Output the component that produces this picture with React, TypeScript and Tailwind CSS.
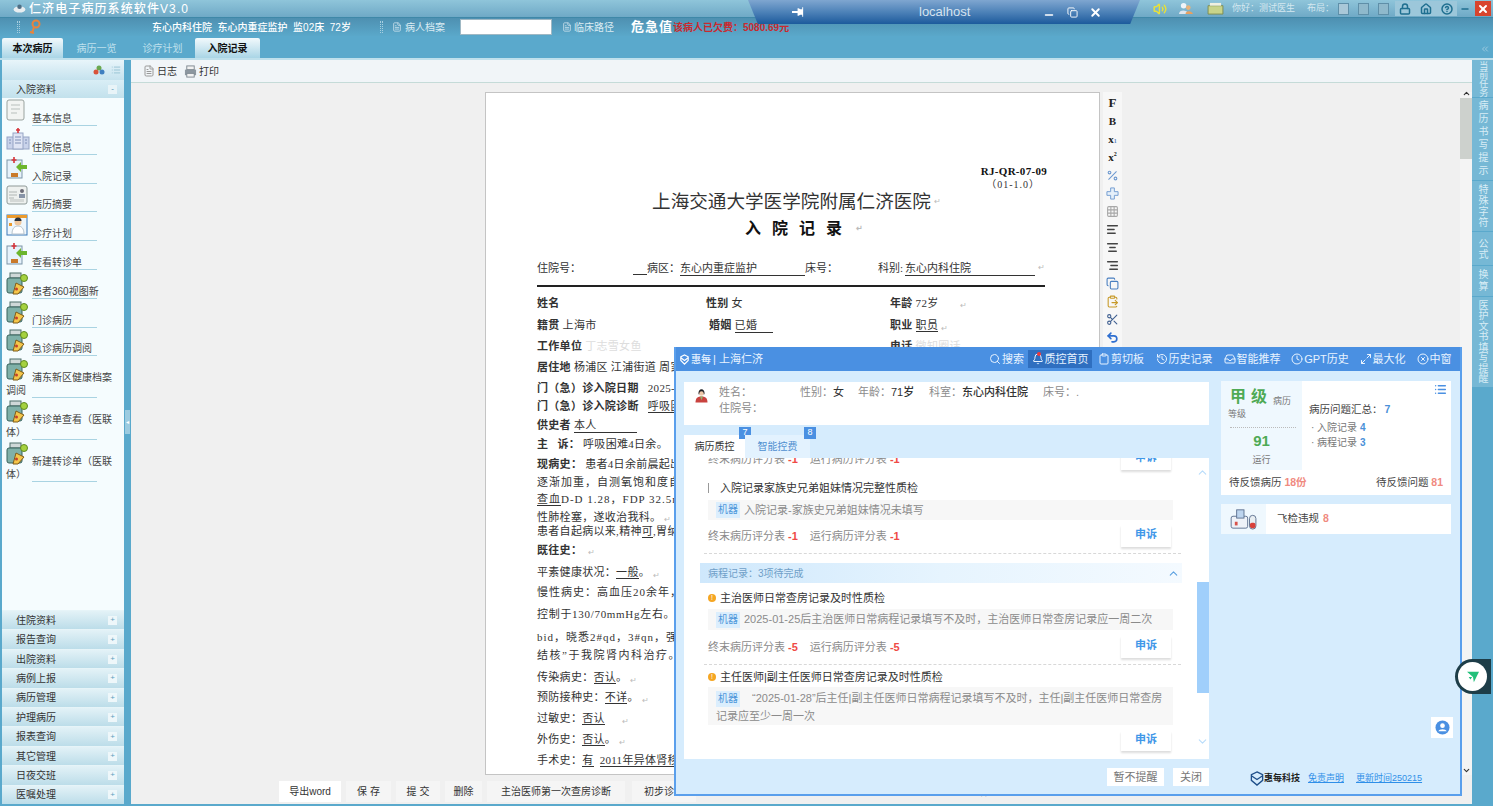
import { AlignCenter, AlignLeft, AlignRight, Bell, ChevronDown, ChevronUp, ChevronsLeft, Clipboard, ClipboardPaste, Clock, Copy, FileText, Grid3x3, HelpCircle, History, Home, Inbox, List, Lock, Maximize2, Minus, Percent, Scissors, Search, Undo2, Volume2, X, XCircle } from 'lucide-react';

const sideItems = [
  { label: '基本信息', icon: 'doc' },
  { label: '住院信息', icon: 'hospital' },
  { label: '入院记录', icon: 'transfer' },
  { label: '病历摘要', icon: 'card' },
  { label: '诊疗计划', icon: 'doctor' },
  { label: '查看转诊单', icon: 'transfer' },
  { label: '患者360视图新', icon: 'jar' },
  { label: '门诊病历', icon: 'jar' },
  { label: '急诊病历调阅', icon: 'jar' },
  { label: '浦东新区健康档案调阅', icon: 'jar' },
  { label: '转诊单查看（医联体）', icon: 'jar' },
  { label: '新建转诊单（医联体）', icon: 'jar' },
];

const sideGroups = ['住院资料', '报告查询', '出院资料', '病例上报', '病历管理', '护理病历', '报表查询', '其它管理', '日夜交班', '医嘱处理'];
const sideTabs = [
  { label: '当前任务', cls: 'h-[37px] text-[9px]' },
  { label: '病历书写提示', cls: 'h-[82px] text-[10px] tracking-[3px]' },
  { label: '特殊字符', cls: 'h-[50px] text-[10px] tracking-[1px]' },
  { label: '公式', cls: 'h-[33px] text-[10px] tracking-[1px]' },
  { label: '换算', cls: 'h-[30px] text-[10px] tracking-[2px]' },
  { label: '医护文书填写提醒', cls: 'h-[90px] text-[10px] tracking-[0.500px]' },
];

function SideIcon({ type }: { type: string }) {
  if (type === 'doc') {
    return (
      <svg viewBox="0 0 20 22" className="h-[22px] w-[20px]">
        <rect x="1" y="1" width="17" height="20" rx="2" fill="#f2f4f2" stroke="#9aa39f" />
        <path d="M5 6h9M5 10h9M5 14h6" stroke="#b8bfbc" />
      </svg>
    );
  }
  if (type === 'hospital') {
    return (
      <svg viewBox="0 0 24 22" className="h-[22px] w-[24px]">
        <rect x="1" y="9" width="22" height="12" fill="#c9d3ea" stroke="#96a4c4" />
        <rect x="7" y="5" width="10" height="16" fill="#dfe5f4" stroke="#96a4c4" />
        <path d="M12 0v5M10 2h4" stroke="#d6333a" strokeWidth="1.6" />
        <path d="M3 12h2M3 15h2M9 9h6M9 12h6M9 15h6M19 12h2M19 15h2" stroke="#7f8fb5" />
      </svg>
    );
  }
  if (type === 'transfer') {
    return (
      <svg viewBox="0 0 22 22" className="h-[22px] w-[22px]">
        <rect x="1" y="3" width="15" height="18" fill="#e6f2fb" stroke="#7c95a8" />
        <path d="M8 0v6M5.500 3h5" stroke="#d6333a" strokeWidth="1.6" />
        <rect x="5" y="16" width="7" height="4" fill="#c9792a" />
        <path d="M21 8h-6V5l-5 5 5 5v-3h6z" fill="#6cb52d" />
      </svg>
    );
  }
  if (type === 'card') {
    return (
      <svg viewBox="0 0 22 20" className="h-[20px] w-[22px]">
        <rect x="1" y="1" width="20" height="18" rx="2" fill="#eef1ef" stroke="#8f9a98" />
        <path d="M3 7h8M3 10h8M3 13h5" stroke="#b0b6b4" />
        <circle cx="16" cy="6" r="2" fill="#6d6d78" />
        <rect x="13" y="9" width="6" height="4" fill="#8895a8" />
        <rect x="4" y="14" width="14" height="3" fill="#d4d8d6" />
      </svg>
    );
  }
  if (type === 'doctor') {
    return (
      <svg viewBox="0 0 22 22" className="h-[22px] w-[22px]">
        <rect x="1" y="1" width="20" height="20" fill="#eef6fb" stroke="#3b78b8" />
        <rect x="1" y="1" width="20" height="3" fill="#ec9a2c" />
        <circle cx="12" cy="8" r="3.500" fill="#f0c79c" />
        <path d="M8.500 7a3.500 3.500 0 0 1 7 0z" fill="#27303c" />
        <path d="M6 20c0-6 3-8 6-8s6 2 6 8z" fill="#fff" stroke="#b6c3cc" />
        <path d="M3 9h3v3H3z" fill="#ec9a2c" />
      </svg>
    );
  }
  return (
    <svg viewBox="0 0 22 24" className="h-[24px] w-[22px]">
      <rect x="4" y="1" width="11" height="5" fill="#cfd8d8" stroke="#4f6f6a" />
      <rect x="1" y="6" width="15" height="15" rx="2" fill="#7fb0a8" stroke="#38625c" />
      <path d="M7 22l3-11 8 4-6 7z" fill="#f4c64a" stroke="#7f5c18" />
      <circle cx="10.500" cy="17" r="1.500" fill="#c2402c" />
      <circle cx="18" cy="6" r="3.500" fill="#a5d13e" stroke="#5e8a22" />
    </svg>
  );
}

function Mark() {
  return <span className="ml-[3px] align-bottom text-[8px] leading-[8px] text-[#bbbbbb]">↵</span>;
}

function Label({ children }: { children: React.ReactNode }) {
  return <b className="mr-[3px] font-bold">{children}</b>;
}

function Val({ children }: { children: React.ReactNode }) {
  return <span className="border-b border-[#333333]">{children}</span>;
}

function ScoreRow({ a, b, cut }: { a: string; b: string; cut?: boolean }) {
  return (
    <div className={`flex h-[22px] items-center justify-between pl-[24px] pr-[38px] ${cut ? '-mt-[10px]' : ''}`}>
      <div className="text-[11px] text-[#8b8b8b]">
        终末病历评分表 <b className="text-[#ef4a45]">{a}</b>
        <span className="ml-[12px]">运行病历评分表 </span>
        <b className="text-[#ef4a45]">{b}</b>
      </div>
      <div className="flex h-[22px] w-[50px] items-center justify-center bg-white pb-[3px] text-[11px] font-bold text-[#3f97e8] shadow-[0_2px_2px_#dddddd]">申诉</div>
    </div>
  );
}

function Tag() {
  return <span className="mr-[4px] inline-block bg-[#dbeefd] px-[2px] text-[10px] leading-[16px] text-[#4f97da]">机器</span>;
}

function QcPopup() {
  const nav = [
    { label: '搜索', icon: <Search size={12} />, cls: 'w-[41px]' },
    { label: '质控首页', icon: <Bell size={12} />, cls: 'relative w-[64px] bg-[#2f6fc0]', dot: true },
    { label: '剪切板', icon: <Clipboard size={12} />, cls: 'w-[56px]' },
    { label: '历史记录', icon: <History size={12} />, cls: 'w-[68px]' },
    { label: '智能推荐', icon: <Inbox size={12} />, cls: 'w-[66px]' },
    { label: 'GPT历史', icon: <Clock size={12} />, cls: 'w-[68px]' },
    { label: '最大化', icon: <Maximize2 size={12} />, cls: 'w-[55px]' },
    { label: '中窗', icon: <XCircle size={12} />, cls: 'w-[46px]' },
  ];
  return (
    <div className="absolute left-[674px] top-[347px] flex h-[449px] w-[788px] flex-col border-x-2 border-b-2 border-[#5a9fec] bg-[#d6ecfd]">
      <div className="flex h-[24px] shrink-0 items-center justify-between bg-[#4a90e2] pl-[3px] pr-[3px] text-[11px] text-[#e8f3ff]">
        <div className="flex items-center gap-[1px]">
          <svg viewBox="0 0 12 12" className="h-[11px] w-[11px]" fill="none" stroke="#ffffff" strokeWidth="1.300">
            <path d="M2 3l4-2 4 2v4l-4 4-4-4z" />
            <path d="M2 4l4 3 4-3" />
          </svg>
          <span className="text-[10px] font-medium">惠每</span>
          <span className="ml-[1px] whitespace-nowrap">| 上海仁济</span>
        </div>
        <div className="flex h-[18px] items-center gap-[1px]">
          {nav.map((n) => (
            <div key={n.label} className={`flex h-[18px] items-center justify-center gap-[1px] whitespace-nowrap ${n.cls}`}>
              {n.icon}
              {n.dot && <span className="absolute left-[9px] top-[2px] h-[4px] w-[4px] rounded-full bg-[#f0383a]" />}
              {n.label}
            </div>
          ))}
        </div>
      </div>

      <div className="flex min-h-0 flex-1 pl-[8px]">
        <div className="flex w-[525px] flex-col">
          <div className="mt-[11px] flex h-[43px] shrink-0 bg-white pl-[10px] pt-[2px] text-[11px] leading-[16px] text-[#8b8b8b]">
            <svg viewBox="0 0 20 22" className="mr-[10px] mt-[1px] h-[20px] w-[15px]">
              <path d="M6 10c-1-9 9-9 8 0z" fill="#1f1f24" />
              <circle cx="10" cy="9" r="3" fill="#f0c8a8" />
              <path d="M2 21c0-6 3-8 8-8s8 2 8 8z" fill="#c9423f" />
              <path d="M8 13h4l-2 5z" fill="#8fb26a" />
            </svg>
            <div>
              <div className="flex whitespace-nowrap">
                <span className="w-[81px]">姓名：</span>
                <span className="w-[58px]">性别：<span className="text-[#333333]">女</span></span>
                <span className="w-[71px]">年龄：<span className="font-medium text-[#333333]">71岁</span></span>
                <span className="w-[114px]">科室：<span className="font-medium text-[#333333]">东心内科住院</span></span>
                <span>床号：.</span>
              </div>
              <div>住院号：</div>
            </div>
          </div>

          <div className="flex h-[33px] shrink-0 items-end text-[10px]">
            <div className="relative flex h-[23px] w-[61px] items-center justify-center bg-white text-[#333333]">
              病历质控
              <span className="absolute -top-[8px] right-[-6px] flex h-[12px] w-[12px] items-center justify-center bg-[#4a90e2] text-[9px] text-white">7</span>
            </div>
            <div className="relative flex h-[23px] w-[65px] items-center justify-center bg-[#e3f2fe] text-[#4f8fd0]">
              智能控费
              <span className="absolute -top-[8px] right-[-6px] flex h-[12px] w-[12px] items-center justify-center bg-[#4a90e2] text-[9px] text-white">8</span>
            </div>
          </div>

          <div className="relative h-[301px] shrink-0 overflow-hidden bg-white">
            <ScoreRow a="-1" b="-1" cut />
            <div className="ml-[24px] mt-[10px] flex h-[16px] items-center text-[11px] text-[#333333]">
              <span className="mr-[11px] h-[10px] w-[1px] bg-[#999999]" />
              入院记录家族史兄弟姐妹情况完整性质检
            </div>
            <div className="ml-[24px] mt-[4px] flex h-[20px] w-[465px] items-center bg-[#f7f7f7] pl-[8px] text-[11px] text-[#8b8b8b]">
              <Tag />
              入院记录-家族史兄弟姐妹情况未填写
            </div>
            <div className="mt-[5px]">
              <ScoreRow a="-1" b="-1" />
            </div>
            <div className="ml-[20px] mt-[6px] w-[477px] border-t border-dashed border-[#d8d8d8]" />

            <div className="ml-[16px] mt-[9px] flex h-[20px] w-[482px] items-center justify-between bg-gradient-to-r from-[#cfe8fc] via-[#e6f4fe] to-[#f4faff] pl-[8px] pr-[2px] text-[10px] text-[#6f9fc8]">
              病程记录：3项待完成
              <ChevronUp size={13} color="#5aa0e0" />
            </div>

            <div className="ml-[24px] mt-[7px] flex h-[16px] items-center text-[11px] text-[#333333]">
              <span className="mr-[4px] flex h-[8px] w-[8px] items-center justify-center rounded-full bg-[#f5a623] text-[7px] text-white">!</span>
              主治医师日常查房记录及时性质检
            </div>
            <div className="ml-[24px] mt-[3px] flex h-[21px] w-[465px] items-center whitespace-nowrap bg-[#f7f7f7] pl-[8px] text-[11px] text-[#8b8b8b]">
              <Tag />
              2025-01-25后主治医师日常病程记录填写不及时，主治医师日常查房记录应一周二次
            </div>
            <div className="mt-[6px]">
              <ScoreRow a="-5" b="-5" />
            </div>
            <div className="ml-[20px] mt-[6px] w-[477px] border-t border-dashed border-[#d8d8d8]" />

            <div className="ml-[24px] mt-[4px] flex h-[16px] items-center text-[11px] text-[#333333]">
              <span className="mr-[4px] flex h-[8px] w-[8px] items-center justify-center rounded-full bg-[#f5a623] text-[7px] text-white">!</span>
              主任医师|副主任医师日常查房记录及时性质检
            </div>
            <div className="ml-[24px] mt-[2px] h-[38px] w-[465px] bg-[#f7f7f7] pl-[8px] pt-[2px] text-[11px] leading-[18px] text-[#8b8b8b]">
              <Tag />
              <span className="ml-[8px]">“2025-01-28”后主任|副主任医师日常病程记录填写不及时，主任|副主任医师日常查房记录应至少一周一次</span>
            </div>
            <div className="mt-[6px] flex justify-end pr-[38px]">
              <div className="flex h-[20px] w-[50px] items-center justify-center pb-[3px] text-[11px] font-bold text-[#3f97e8] shadow-[0_2px_2px_#dddddd]">申诉</div>
            </div>

            <ChevronUp size={13} color="#b8dcfb" className="absolute right-[0px] top-[8px]" />
            <div className="absolute right-0 top-[124px] h-[111px] w-[12px] bg-[#a0cffb]" />
            <ChevronDown size={13} color="#b8dcfb" className="absolute right-[0px] top-[277px]" />
          </div>

          <div className="mt-[9px] flex justify-end gap-[9px] text-[11px] text-[#777777]">
            <div className="flex h-[18px] w-[57px] items-center justify-center bg-white">暂不提醒</div>
            <div className="flex h-[18px] w-[36px] items-center justify-center bg-white">关闭</div>
          </div>
        </div>

        <div className="relative ml-[12px] flex w-[230px] flex-col">
          <div className="mt-[10px] h-[114px] shrink-0 bg-white text-[10px] text-[#777777]">
            <div className="flex h-[89px]">
              <div className="w-[81px] bg-[#eff8fe] pl-[9px]">
                <div className="flex h-[27px] items-end gap-[1px] whitespace-nowrap">
                  <span className="font-['Liberation_Serif','Noto_Sans_CJK_SC',serif] text-[16px] font-bold leading-[22px] tracking-[5px] text-[#4eaa55]">甲级</span>
                  <span className="text-[9px] leading-[14px]">病历</span>
                </div>
                <div className="-ml-[2px] text-[9px] leading-[13px]">等级</div>
                <div className="mt-[6px] w-[66px] border-t border-dotted border-[#bbbbbb]" />
                <div className="mt-[2px] pr-[9px] text-center">
                  <b className="block text-[15px] leading-[22px] text-[#4eaa55]">91</b>
                  <span className="text-[9px] leading-[14px]">运行</span>
                </div>
              </div>
              <div className="relative flex-1 pl-[7px] pt-[20px]">
                <List size={13} color="#4a90e2" strokeWidth={2.500} className="absolute right-[4px] top-[2px]" />
                <div className="text-[10.500px] leading-[16px] text-[#444444]">
                  病历问题汇总：<b className="ml-[2px] text-[#4a90d8]">7</b>
                </div>
                <div className="mt-[3px] pl-[2px] leading-[15px]">· 入院记录 <b className="text-[#4a90d8]">4</b></div>
                <div className="pl-[2px] leading-[15px]">· 病程记录 <b className="text-[#4a90d8]">3</b></div>
              </div>
            </div>
            <div className="flex h-[25px] items-center justify-between px-[8px] text-[10.500px] text-[#444444]">
              <span>待反馈病历 <b className="text-[#f08a80]">18份</b></span>
              <span>待反馈问题 <b className="text-[#f08a80]">81</b></span>
            </div>
          </div>
          <div className="mt-[9px] flex h-[30px] shrink-0 items-center bg-white text-[10.500px] text-[#444444]">
            <div className="flex h-[30px] w-[45px] items-center justify-center bg-[#eff8fe]">
              <svg viewBox="0 0 30 24" className="h-[22px] w-[28px]">
                <rect x="1" y="9" width="18" height="13" rx="2" fill="#eef2f8" stroke="#5b6f8e" />
                <rect x="7" y="2" width="8" height="9" fill="#bcd4ee" stroke="#5b6f8e" />
                <rect x="5" y="15" width="3" height="4" fill="#d8534a" />
                <rect x="21" y="8" width="7" height="15" rx="3.500" fill="#e8eef2" stroke="#5b6f8e" />
                <rect x="21.500" y="16" width="6" height="6" rx="2" fill="#d8403a" />
              </svg>
            </div>
            <span className="ml-[11px]">飞检违规</span>
            <b className="ml-[4px] text-[#f08a80]">8</b>
          </div>

          <div className="absolute left-[210px] top-[346px] flex h-[21px] w-[22px] items-center justify-center bg-white">
            <svg viewBox="0 0 16 16" className="h-[15px] w-[15px]">
              <circle cx="8" cy="8" r="7.500" fill="#4a90e2" />
              <circle cx="8" cy="6" r="2.500" fill="#ffffff" />
              <path d="M3.500 12c1-3 8-3 9 0z" fill="#ffffff" />
            </svg>
          </div>

          <div className="absolute bottom-[8px] left-[29px] flex items-center whitespace-nowrap text-[9px]">
            <svg viewBox="0 0 14 16" className="h-[15px] w-[14px]" fill="none" stroke="#1f4f8a" strokeWidth="1.400">
              <path d="M7 1l6 3v6l-6 5-6-5V4z" />
              <path d="M1 5l6 4 6-4" />
            </svg>
            <b className="w-[36px] text-[#222222]">惠每科技</b>
            <span className="ml-[8px] text-[#2f8fe8] underline">免责声明</span>
            <span className="ml-[12px] text-[#2f8fe8] underline">更新时间250215</span>
          </div>
        </div>
      </div>
    </div>
  );
}

function DocumentPage() {
  return (
    <div className="h-[683px] w-[615px] shrink-0 overflow-hidden border border-[#c4c4c4] bg-white pl-[51px] pr-[55px] pt-[71px] font-['Liberation_Serif','Noto_Sans_CJK_SC',serif] text-[11px] leading-[14px] tracking-[0.300px] text-[#333333]">
      <div className="h-[14px] text-right font-bold text-[#111111]"><span className="-mr-[3px] inline-block">RJ-QR-07-09</span></div>
      <div className="h-[13px] pr-[4px] text-right text-[10px] tracking-[1px]">（01-1.0）</div>
      <div className="flex h-[22px] items-center justify-center pl-[12px] text-[18.600px] tracking-normal text-[#333333]">上海交通大学医学院附属仁济医院<Mark /></div>
      <div className="mt-[1px] flex h-[30px] items-center whitespace-nowrap pl-[208px] text-[16px] font-bold tracking-[11px] text-[#111111]">入院记录<Mark /></div>
      <div className="mt-[14px] flex h-[20px] items-center whitespace-nowrap tracking-normal">
        <span className="w-[96px] shrink-0">住院号：</span>
        <span className="w-[14px] shrink-0 border-b border-[#333333] leading-[12px]">&nbsp;</span>
        <span className="w-[33px] shrink-0">病区：</span>
        <span className="w-[125px] shrink-0 border-b border-[#333333]">东心内重症监护</span>
        <span className="w-[73px] shrink-0">床号：</span>
        <span className="w-[27px] shrink-0 whitespace-nowrap">科别:</span>
        <span className="w-[130px] shrink-0 border-b border-[#333333]">东心内科住院</span>
        <Mark />
      </div>
      <div className="mt-[7px] h-[2px] w-[508px] bg-[#222222]" />
      <div className="mt-[9px] flex h-[22px]">
        <span className="w-[169px]"><Label>姓名</Label></span>
        <span className="w-[184px]"><Label>性别</Label>女</span>
        <span><Label>年龄</Label>72岁<span className="ml-[18px]"><Mark /></span></span>
      </div>
      <div className="flex h-[21px]">
        <span className="w-[172px]"><Label>籍贯</Label>上海市</span>
        <span className="w-[181px]"><Label>婚姻</Label><span className="inline-block w-[38px] border-b border-[#333333]">已婚</span></span>
        <span><Label>职业</Label><Val>职员</Val><Mark /></span>
      </div>
      <div className="flex h-[21px]">
        <span className="w-[353px]"><Label>工作单位</Label><span className="text-[#dddddd]">丁志雪女鱼</span></span>
        <span><Label>电话</Label><span className="text-[#dddddd]">微知圈话</span></span>
      </div>
      <div className="h-[21px] whitespace-nowrap"><Label>居住地</Label>杨浦区 江浦街道 周家嘴路</div>
      <div className="h-[18px] whitespace-nowrap"><Label>门（急）诊入院日期</Label>&nbsp;&nbsp;2025-01-25</div>
      <div className="h-[19px] whitespace-nowrap"><Label>门（急）诊入院诊断</Label>&nbsp;&nbsp;<Val>呼吸困难</Val></div>
      <div className="h-[19px]"><Label>供史者</Label><span className="inline-block w-[63px] border-b border-[#333333]">本人</span></div>
      <div className="h-[20px] whitespace-nowrap"><Label>主&nbsp;&nbsp;&nbsp;诉：</Label>呼吸困难4日余。</div>
      <div className="h-[18px] whitespace-nowrap"><Label>现病史：</Label>患者4日余前晨起出现呼吸困难</div>
      <div className="h-[17px] whitespace-nowrap tracking-[1px]">逐渐加重，自测氧饱和度自</div>
      <div className="h-[18px] whitespace-nowrap tracking-[1px]"><Val>查血</Val>D-D 1.28，FDP 32.5mg/L</div>
      <div className="h-[14px] whitespace-nowrap">性肺栓塞，遂收治我科。<Mark /></div>
      <div className="h-[19px] whitespace-nowrap">患者自起病以来,精神<Val>可</Val>,胃纳</div>
      <div className="h-[22px]"><Label>既往史：</Label><Mark /></div>
      <div className="h-[20px]">平素健康状况：<Val>一般</Val>。<Mark /></div>
      <div className="h-[22px] whitespace-nowrap tracking-[1px]">慢性病史：高血压20余年，</div>
      <div className="h-[23px] whitespace-nowrap tracking-[0.700px]">控制于130/70mmHg左右。1</div>
      <div className="h-[18px] whitespace-nowrap tracking-[1px]">bid，晓悉2#qd，3#qn，强</div>
      <div className="h-[22px] whitespace-nowrap tracking-[1.500px]">结核”于我院肾内科治疗。</div>
      <div className="h-[20px]">传染病史：<Val>否认</Val>。<Mark /></div>
      <div className="h-[21px]">预防接种史：<Val>不详</Val>。<Mark /></div>
      <div className="h-[21px]">过敏史：<Val>否认</Val><span className="ml-[14px]"><Mark /></span></div>
      <div className="h-[21px]">外伤史：<Val>否认</Val>。<Mark /></div>
      <div className="h-[14px] whitespace-nowrap">手术史：<Val>有</Val>&nbsp;&nbsp;<Val>2011年异体肾移植</Val></div>
    </div>
  );
}

function DocTools() {
  const cls = 'flex h-[18px] w-[19px] items-center justify-center';
  return (
    <div className="ml-[3px] h-[255px] w-[19px] shrink-0 bg-[#f7f7f7] pt-[2px] font-['Liberation_Serif',serif] text-[#222222]">
      <div className={`${cls} text-[13px] font-bold`}>F</div>
      <div className={`${cls} text-[11px] font-bold`}>B</div>
      <div className={`${cls} text-[11px] font-bold`}>x<sub className="text-[6px] text-[#5a84c0]">1</sub></div>
      <div className={`${cls} text-[11px] font-bold`}>x<sup className="text-[6px]">2</sup></div>
      <div className={cls}><Percent size={13} color="#6f9ad0" /></div>
      <div className={cls}>
        <svg viewBox="0 0 14 14" className="h-[13px] w-[13px]"><path d="M5 1h4v4h4v4H9v4H5V9H1V5h4z" fill="#e6f0fa" stroke="#6f9ad0" /></svg>
      </div>
      <div className={cls}><Grid3x3 size={13} color="#a8a8a8" /></div>
      <div className={cls}><AlignLeft size={13} color="#444444" strokeWidth={2.500} /></div>
      <div className={cls}><AlignCenter size={13} color="#444444" strokeWidth={2.500} /></div>
      <div className={cls}><AlignRight size={13} color="#444444" strokeWidth={2.500} /></div>
      <div className={cls}><Copy size={13} color="#4a7fc0" /></div>
      <div className={cls}><ClipboardPaste size={13} color="#c79a2a" /></div>
      <div className={cls}><Scissors size={13} color="#3f5f90" /></div>
      <div className={cls}><Undo2 size={13} color="#2f6fd0" strokeWidth={3} /></div>
    </div>
  );
}

export default function App() {
  return (
    <div className="relative h-[807px] w-[1495px] overflow-hidden bg-white font-['Liberation_Sans','Noto_Sans_CJK_SC',sans-serif]">
      <div className="flex h-[806px] w-[1493px] flex-col bg-[#5aa9cc]">
        {/* title row */}
        <div className="flex h-[18px] shrink-0 items-center justify-between border-b border-[#3f88a8] bg-gradient-to-b from-[#8fc5da] to-[#6fa9c6] pl-[13px] pr-[2px]">
          <div className="flex items-center text-[12px] font-medium tracking-[1.100px] text-white">
            <svg viewBox="0 0 14 10" className="mr-[3px] h-[9px] w-[13px]"><ellipse cx="7" cy="6" rx="6.500" ry="3.500" fill="#e8edf0" /><circle cx="7" cy="3" r="2.500" fill="#4f6f85" /></svg>
            仁济电子病历系统软件V3.0
          </div>
          <div className="flex items-center text-[9px] text-[#d5e8f0]">
            <Volume2 size={14} color="#e8e03a" strokeWidth={2.500} className="mr-[11px]" />
            <svg viewBox="0 0 16 14" className="mr-[14px] h-[13px] w-[15px]"><circle cx="6" cy="4" r="3" fill="#f0f4f8" /><path d="M1 13c0-5 9-5 10 0z" fill="#dfe6ee" /><circle cx="11" cy="6" r="2.500" fill="#e9b27a" /><path d="M8 13c0-4 7-4 8 0z" fill="#e9a060" /></svg>
            <svg viewBox="0 0 18 14" className="mr-[8px] h-[13px] w-[17px]"><path d="M1 4h16v9H1z" fill="#c8d48a" stroke="#7c8a50" /><path d="M3 1h12v3H3z" fill="#f0f0e0" /></svg>
            <span className="w-[75px]">你好：测试医生</span>
            <span className="w-[31px]">布局：</span>
            <span className="mr-[9px] h-[12px] w-[11px] border border-[#5f8fa8] bg-[#a9c8d8]" />
            <span className="mr-[9px] h-[12px] w-[11px] border border-[#5f8fa8] bg-[#8fb9cc]" />
            <span className="mr-[6px] h-[12px] w-[11px] border border-[#5f8fa8] bg-[#8fb9cc]" />
            <div className="flex h-[15px] w-[62px] items-center justify-around bg-[#9cc7da]">
              <Lock size={12} color="#1f6f90" strokeWidth={3} />
              <Home size={12} color="#1f6f90" strokeWidth={3} />
              <HelpCircle size={12} color="#1f6f90" strokeWidth={3} />
            </div>
            <Minus size={10} color="#1f6f90" strokeWidth={4} className="ml-[3px] mr-[5px]" />
            <div className="flex h-[15px] w-[16px] items-center justify-center bg-[#d8452e]"><X size={12} color="#ffffff" strokeWidth={4} /></div>
          </div>
        </div>

        {/* patient toolbar */}
        <div className="flex h-[18px] shrink-0 items-center whitespace-nowrap bg-gradient-to-b from-[#4e90b1] to-[#5aa8ca] text-[10px] text-[#dcecf3]">
          <span className="ml-[17px] h-[12px] w-[3px] border-x border-dotted border-[#a8cfe0]" />
          <svg viewBox="0 0 12 16" className="ml-[9px] h-[16px] w-[12px]" fill="none" stroke="#e8843c" strokeWidth="2">
            <circle cx="7" cy="5" r="3.500" />
            <path d="M5 8l-2 6M1 13l4 1" />
          </svg>
          <b className="ml-[111px] w-[196px] font-medium text-white">东心内科住院&nbsp;&nbsp;东心内重症监护&nbsp;&nbsp;监02床&nbsp;&nbsp;72岁</b>
          <span className="ml-[32px] h-[12px] w-[3px] border-x border-dotted border-[#a8cfe0]" />
          <FileText size={10} color="#c8dfea" className="ml-[9px]" />
          <span className="ml-[3px] w-[55px]">病人档案</span>
          <div className="h-[16px] w-[92px] border border-[#9fb8c4] bg-white" />
          <FileText size={10} color="#c8dfea" className="ml-[10px]" />
          <span className="ml-[2px] w-[57px]">临床路径</span>
          <b className="w-[42px] text-[13px] tracking-[1px] text-white">危急值</b>
          <b className="text-[10px] font-bold text-[#c92a2f]">该病人已欠费：5080.69元</b>
        </div>

        {/* tabs */}
        <div className="flex h-[22px] shrink-0 items-end pl-[2px] text-[10px]">
          <div className="flex h-[20px] w-[61px] items-center justify-center rounded-t-[2px] bg-gradient-to-b from-[#f2f9fc] to-[#a9d5e6] font-bold text-[#111111]">本次病历</div>
          <div className="flex h-[20px] w-[67px] items-center justify-center text-[#bfe0ec]">病历一览</div>
          <div className="flex h-[20px] w-[65px] items-center justify-center text-[#bfe0ec]">诊疗计划</div>
          <div className="flex h-[20px] w-[65px] items-center justify-center rounded-t-[2px] bg-gradient-to-b from-[#f2f9fc] to-[#a9d5e6] font-bold text-[#111111]">入院记录</div>
          <div className="ml-auto pb-[4px] pr-[3px]"><ChevronsLeft size={10} color="#a8d0e2" /></div>
        </div>

        {/* body */}
        <div className="flex min-h-0 flex-1 border-t-2 border-[#bfe0ec]">
          <div className="mb-[2px] ml-[2px] flex w-[122px] shrink-0 flex-col bg-[#f5fcfe]">
            <div className="flex h-[20px] shrink-0 items-center justify-end gap-[6px] bg-gradient-to-b from-[#e8f5fa] to-[#c5e2ee] pr-[3px]">
              <svg viewBox="0 0 12 10" className="h-[10px] w-[12px]"><circle cx="6" cy="3" r="2.500" fill="#6aa84f" /><circle cx="3" cy="7" r="2.500" fill="#d8533a" /><circle cx="9" cy="7" r="2.500" fill="#3f7fc0" /></svg>
              <List size={10} color="#8fbdd0" />
            </div>
            <div className="flex h-[18px] shrink-0 items-center justify-between bg-gradient-to-b from-[#d9eef6] to-[#c2e1ec] pl-[14px] pr-[7px] text-[10px] text-[#333333]">
              入院资料
              <span className="flex h-[9px] w-[9px] items-center justify-center bg-[#e8f4f8] text-[8px] leading-none text-[#4f8fb0]">-</span>
            </div>
            <div className="min-h-0 flex-1 overflow-hidden pl-[4px] pr-[6px] pt-[1px] text-[10px] leading-[13px] text-[#444444]">
              {sideItems.map((item) => (
                <div key={item.label}>
                  <div>
                    <span className="mr-[4px] inline-block h-[26px] w-[22px] align-bottom">
                      <SideIcon type={item.icon} />
                    </span>
                    {item.label}
                  </div>
                  <div className="mb-[1.800px] ml-[26px] h-[1px] w-[65px] bg-[#a9d3e2]" />
                </div>
              ))}
            </div>
            {sideGroups.map((g) => (
              <div key={g} className="flex h-[19.400px] shrink-0 items-center justify-between border-t border-[#e6f4f8] bg-gradient-to-b from-[#e3f2f7] to-[#bcdde9] pl-[14px] pr-[7px] text-[10px] text-[#333333]">
                {g}
                <span className="flex h-[9px] w-[9px] items-center justify-center bg-[#eef7fa] text-[8px] leading-none text-[#5f9fc0]">+</span>
              </div>
            ))}
          </div>

          <div className="flex w-[7px] shrink-0 items-center justify-center">
            <div className="mb-[22px] flex h-[24px] w-[5px] items-center justify-center bg-[#9ccbe0] text-[6px] text-white">◂</div>
          </div>

          <div className="mb-[2px] flex min-w-0 flex-1 flex-col bg-[#f0f0f0]">
            <div className="flex h-[23px] shrink-0 items-center border-b border-[#c5dbd8] bg-[#f1f5f8] pl-[12px] text-[10px] text-[#333333]">
              <FileText size={12} color="#9a9a9a" />
              <span className="ml-[2px]">日志</span>
              <svg viewBox="0 0 14 14" className="ml-[7px] h-[13px] w-[13px]"><rect x="1" y="5" width="12" height="6" fill="#8d97a0" /><rect x="3" y="1" width="8" height="4" fill="#f2f2f2" stroke="#7d8790" /><rect x="3" y="9" width="8" height="4" fill="#f2f2f2" stroke="#7d8790" /></svg>
              <span className="ml-[2px]">打印</span>
            </div>
            <div className="flex min-h-0 flex-1 pl-[354px] pt-[9px]">
              <DocumentPage />
              <DocTools />
              <div className="ml-[338px] flex h-[683px] w-[12px] shrink-0 flex-col bg-[#f4f4f4]">
                <ChevronUp size={9} color="#333333" strokeWidth={3} className="mx-auto mt-[-3px] h-[9px] shrink-0" />
                <div className="h-[61px] w-[12px] shrink-0 bg-[#cdd1cd]" />
                <ChevronDown size={9} color="#333333" strokeWidth={3} className="mx-auto mt-auto shrink-0" />
              </div>
            </div>
            <div className="flex h-[28px] shrink-0 items-center gap-[5px] pl-[148px] pt-[2px] text-[10px] text-[#333333]">
              <div className="flex h-[21px] w-[62px] items-center justify-center bg-white">导出word</div>
              <div className="flex h-[21px] w-[45px] items-center justify-center bg-[#f5f5f5]">保 存</div>
              <div className="flex h-[21px] w-[44px] items-center justify-center bg-[#f5f5f5]">提 交</div>
              <div className="flex h-[21px] w-[37px] items-center justify-center bg-[#f5f5f5]">删除</div>
              <div className="flex h-[21px] w-[138px] items-center justify-center bg-[#f5f5f5]">主治医师第一次查房诊断</div>
              <div className="ml-[2px] flex h-[21px] w-[64px] items-center justify-center bg-[#f5f5f5]">初步诊断</div>
              <span className="ml-[264px] h-[9px] w-[9px] border border-[#666666]" />
              <span className="-ml-[2px] w-[46px] whitespace-nowrap">临床查看</span>
              <span className="h-[9px] w-[31px] border border-[#888888]" />
              <span className="ml-[143px] whitespace-nowrap text-[9px]">最后修改人：郭磊修医师 状态：未提交</span>
            </div>
          </div>

          <div className="flex w-[21px] shrink-0 flex-col gap-[1px]">
            {sideTabs.map((t) => (
              <div key={t.label} className={`flex w-[21px] shrink-0 items-center justify-center whitespace-nowrap bg-[#76b8d5] text-[#d8edf5] [writing-mode:vertical-rl] ${t.cls}`}>
                {t.label}
              </div>
            ))}
          </div>
        </div>
      </div>

      {/* remote desktop connection bar */}
      <div className="absolute left-[748px] top-0 flex h-[24px] w-[392px] items-center bg-gradient-to-b from-[#7fa6d0] via-[#4d82b8] to-[#1b5a9c] text-[#dfe9f3] [clip-path:polygon(0_0,100%_0,97.500%_100%,2.500%_100%)]">
        <svg viewBox="0 0 14 10" className="ml-[44px] h-[10px] w-[13px]" fill="#ffffff"><path d="M0 4h6V1h1l2 1h2V0h1v10h-1V8H9L7 9H6V6H0z" /></svg>
        <span className="ml-[114px] w-[52px] text-[13px] text-[#d6e3ef]">localhost</span>
        <Minus size={12} color="#ffffff" strokeWidth={3} className="ml-[72px] mt-[5px]" />
        <Copy size={11} color="#ffffff" className="ml-[12px]" />
        <X size={13} color="#ffffff" strokeWidth={3.500} className="ml-[11px]" />
      </div>

      <QcPopup />

      {/* floating assistant */}
      <div className="absolute left-[1455px] top-[659px] flex h-[35px] w-[36px] items-center rounded-l-[18px] bg-[#1d3d48]">
        <div className="ml-[3px] flex h-[29px] w-[29px] items-center justify-center rounded-full bg-white">
          <svg viewBox="0 0 16 14" className="h-[12px] w-[14px]" fill="#22c07a"><path d="M1 1h14L9 13 8 7zM3 7h4l-2 3z" /></svg>
        </div>
      </div>
    </div>
  );
}
